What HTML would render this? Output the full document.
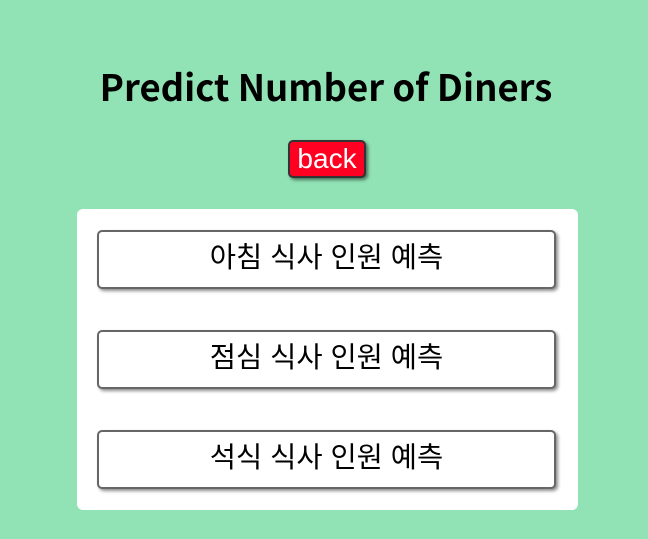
<!DOCTYPE html>
<html><head><meta charset="utf-8"><style>
body{margin:0;width:648px;height:539px;background:#91e3b5;font-family:"Liberation Sans","Noto Sans CJK KR",sans-serif;position:relative;overflow:hidden}
h1{position:absolute;top:63px;left:0;width:652px;text-align:center;margin:0;font-size:36.5px;font-weight:bold;color:#000;font-family:"Noto Sans CJK KR","Liberation Sans",sans-serif;line-height:46px}
.back{position:absolute;left:288px;top:140px;width:78px;height:38px;background:#ff0022;color:#fff;border:2px solid #333;border-radius:5px;box-sizing:border-box;font-size:28px;line-height:33px;text-align:center;box-shadow:2px 2px 3px rgba(0,0,0,.5)}
.card{position:absolute;left:77px;top:209px;width:501px;height:301px;background:#fff;border-radius:6px}
.btn{position:absolute;left:20px;width:459px;height:59px;box-sizing:border-box;border:2px solid #666;border-radius:5px;background:#fff;box-shadow:2px 2px 3px rgba(0,0,0,.45);text-align:center;font-size:28.5px;line-height:52px;color:#000}
</style></head><body>
<h1>Predict Number of Diners</h1>
<div class="back">back</div>
<div class="card">
<div class="btn" style="top:21px">아침 식사 인원 예측</div>
<div class="btn" style="top:121px">점심 식사 인원 예측</div>
<div class="btn" style="top:221px">석식 식사 인원 예측</div>
</div>
</body></html>
